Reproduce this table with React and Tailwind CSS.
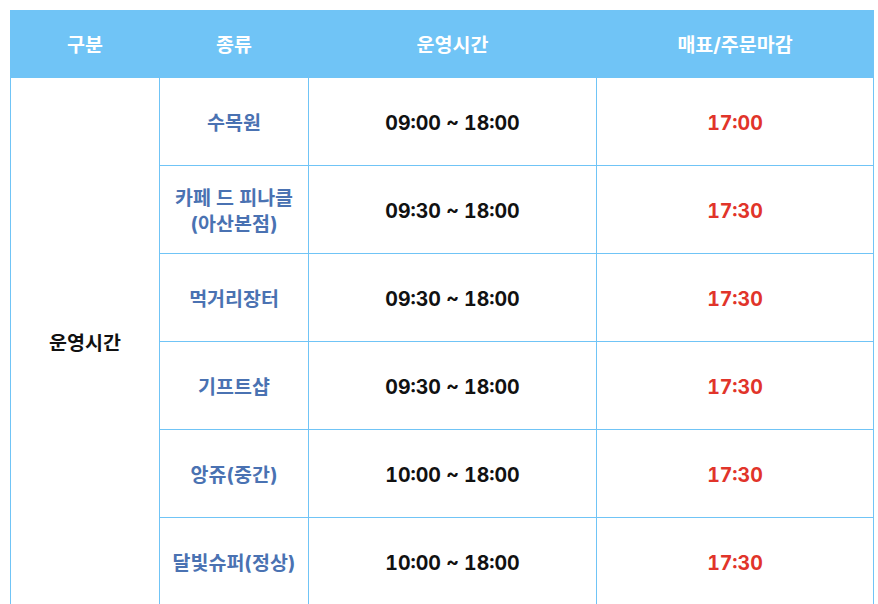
import React from "react";

const rows = [
  { name: ["수목원"], time: "09:00 ~ 18:00", close: "17:00" },
  { name: ["카페 드 피나클", "(아산본점)"], time: "09:30 ~ 18:00", close: "17:30" },
  { name: ["먹거리장터"], time: "09:30 ~ 18:00", close: "17:30" },
  { name: ["기프트샵"], time: "09:30 ~ 18:00", close: "17:30" },
  { name: ["앙쥬(중간)"], time: "10:00 ~ 18:00", close: "17:30" },
  { name: ["달빛슈퍼(정상)"], time: "10:00 ~ 18:00", close: "17:30" },
];

export default function App() {
  return (
    <div
      className="bg-white w-[878px] h-[604px] overflow-hidden pt-[10px] pl-[10px]"
      style={{ fontFamily: 'Inter, "Noto Sans CJK KR", "Noto Sans", sans-serif' }}
    >
      <table className="border-collapse table-fixed w-[863px] text-[19.5px] font-bold leading-[26px] tabular-nums">
        <colgroup>
          <col className="w-[149px]" />
          <col className="w-[149px]" />
          <col className="w-[288px]" />
          <col className="w-[277px]" />
        </colgroup>
        <thead>
          <tr className="bg-[#70c4f6] text-white h-[67px]">
            <th className="border border-[#70c4f6] font-bold pt-[2px]">구분</th>
            <th className="border border-[#70c4f6] font-bold pt-[2px]">종류</th>
            <th className="border border-[#70c4f6] font-bold pt-[2px]">운영시간</th>
            <th className="border border-[#70c4f6] font-bold pt-[2px]">매표/주문마감</th>
          </tr>
        </thead>
        <tbody>
          {rows.map((r, i) => (
            <tr key={i} className="h-[88px]">
              {i === 0 && (
                <td rowSpan={6} className="border border-[#70c4f6] text-center text-[#111] pt-[2px]">
                  운영시간
                </td>
              )}
              <td className="border border-[#70c4f6] text-center text-[#4a72b2] pt-[2px]">
                {r.name.map((n, j) => (
                  <div key={j}>{n}</div>
                ))}
              </td>
              <td className="border border-[#70c4f6] text-center text-[#111] pt-[2px]">{r.time}</td>
              <td className="border border-[#70c4f6] text-center text-[#e1342a] pt-[2px]">{r.close}</td>
            </tr>
          ))}
        </tbody>
      </table>
    </div>
  );
}
